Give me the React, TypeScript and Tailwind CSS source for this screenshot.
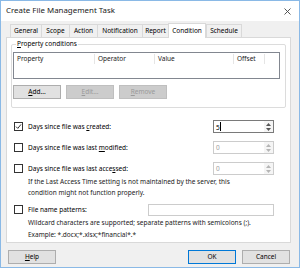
import React from "react";

const font = { fontFamily: '"Noto Sans", "Open Sans", sans-serif' };

function Check({ checked }: { checked?: boolean }) {
  return (
    <span className="flex h-[9px] w-[9px] shrink-0 items-center justify-center border border-[#333333] bg-white">
      {checked && (
        <svg width="7" height="7" viewBox="0 0 7 7">
          <path d="M1 3.6 L2.8 5.4 L6 1.4" fill="none" stroke="#333" strokeWidth="1" />
        </svg>
      )}
    </span>
  );
}

function Spin({ value, disabled }: { value: string; disabled?: boolean }) {
  return (
    <div className={`flex h-[13px] w-[61px] border ${disabled ? "border-[#cccccc] text-[#a0a0a0]" : "border-[#7a7a7a] text-black"} bg-white`}>
      <span className="flex-1 pl-[2px] leading-[11px]">
        {value}
        {!disabled && <span className="inline-block h-[9px] w-px translate-y-[1px] bg-black" />}
      </span>
      <span className="flex w-[9px] flex-col items-center justify-center gap-[2px] bg-[#f5f5f5]">
        <svg width="5" height="3" viewBox="0 0 5 3"><path d="M0 3 L2.5 0 L5 3Z" fill={disabled ? "#b5b5b5" : "#555"} /></svg>
        <svg width="5" height="3" viewBox="0 0 5 3"><path d="M0 0 L2.5 3 L5 0Z" fill={disabled ? "#b5b5b5" : "#555"} /></svg>
      </span>
    </div>
  );
}

function Btn({ children, disabled, focus }: { children: React.ReactNode; disabled?: boolean; focus?: boolean }) {
  return (
    <div
      className={`flex h-[14px] w-[48px] items-center justify-center border ${
        disabled
          ? "border-[#bfbfbf] bg-[#cccccc] text-[#9a9a9a]"
          : focus
          ? "border-[#0078d7] bg-[#e1e1e1] text-black"
          : "border-[#adadad] bg-[#e1e1e1] text-black"
      }`}
    >
      {children}
    </div>
  );
}

const tabs = [
  { label: "General", w: "w-[31px]" },
  { label: "Scope", w: "w-[28px]" },
  { label: "Action", w: "w-[28px]" },
  { label: "Notification", w: "w-[45px]" },
  { label: "Report", w: "w-[26px]" },
  { label: "Condition", w: "w-[38px]" },
  { label: "Schedule", w: "w-[36px]" },
];

export default function App() {
  return (
    <div style={font} className="flex h-[268px] w-[300px] flex-col border border-[#8ab9e6] bg-[#f0f0f0] text-[6.5px] text-black">
      <div className="flex h-[20px] shrink-0 items-center justify-between bg-white pl-[5px] pr-[8px]">
        <span className="text-[7.9px] text-[#1a1a1a]">Create File Management Task</span>
        <svg width="7" height="7" viewBox="0 0 7 7">
          <path d="M0.5 0.5 L6.5 6.5 M6.5 0.5 L0.5 6.5" stroke="#444" strokeWidth="0.9" />
        </svg>
      </div>

      <div className="flex flex-1 flex-col px-[5px] pt-[2px]">
        <div className="flex h-[14px] items-end pl-[4px]">
          {tabs.map((t) =>
            t.label === "Condition" ? (
              <div key={t.label} className={`relative z-10 -mb-px flex h-[15px] ${t.w} items-center justify-center border border-b-0 border-[#d9d9d9] bg-white`}>
                {t.label}
              </div>
            ) : (
              <div key={t.label} className={`flex h-[13px] ${t.w} items-center justify-center border border-b-0 border-r-0 border-[#d9d9d9] bg-[#f0f0f0] last:border-r`}>
                {t.label}
              </div>
            )
          )}
        </div>

        <div className="flex h-[206px] w-[285px] flex-col border border-[#d9d9d9] bg-white px-[4px]">
          <div className="relative mt-[6px] h-[64px] rounded-[2px] border border-[#dcdcdc] px-[1px]">
            <span className="absolute -top-[6px] left-[4px] bg-white px-[1px] leading-[10px]">
              <u>P</u>roperty conditions
            </span>
            <div className="mt-[7px] h-[27px] w-[267px] border border-[#828790] bg-white">
              <div className="flex h-[12px] items-center text-[#1a1a1a]">
                <span className="w-[81px] border-r border-[#e5e5e5] pl-[3px]">Property</span>
                <span className="w-[60px] border-r border-[#e5e5e5] pl-[3px]">Operator</span>
                <span className="w-[79px] border-r border-[#e5e5e5] pl-[3px]">Value</span>
                <span className="w-[31px] border-r border-[#e5e5e5] pl-[3px]">Offset</span>
              </div>
            </div>
            <div className="mt-[6px] flex gap-[5px]">
              <Btn>
                <span><u>A</u>dd...</span>
              </Btn>
              <Btn disabled>
                <span><u>E</u>dit...</span>
              </Btn>
              <Btn disabled>
                <span><u>R</u>emove</span>
              </Btn>
            </div>
          </div>

          <div className="mt-[12px] flex flex-col pl-[3px] pr-[12px]">
            <div className="flex h-[13px] items-center">
              <Check checked />
              <span className="ml-[5px] flex-1">Days since file was <u>c</u>reated:</span>
              <Spin value="5" />
            </div>
            <div className="mt-[8px] flex h-[13px] items-center">
              <Check />
              <span className="ml-[5px] flex-1">Days since file was last <u>m</u>odified:</span>
              <Spin value="0" disabled />
            </div>
            <div className="mt-[8px] flex h-[13px] items-center">
              <Check />
              <span className="ml-[5px] flex-1">Days since file was last acce<u>s</u>sed:</span>
              <Spin value="0" disabled />
            </div>
            <div className="mt-[1px] pl-[14px] leading-[11px] text-[#1a1a1a]">
              If the Last Access Time setting is not maintained by the server, this
              <br />
              condition might not function properly.
            </div>
            <div className="mt-[5px] flex h-[13px] items-center">
              <Check />
              <span className="ml-[5px] flex-1">File name patterns:</span>
              <div className="h-[12px] w-[126px] border border-[#cccccc] bg-white" />
            </div>
            <div className="mt-[1px] pl-[14px] leading-[12px] text-[#1a1a1a]">
              Wildcard characters are supported; separate patterns with semicolons (;).
              <br />
              Example: *.docx;*.xlsx;*financial*.*
            </div>
          </div>
        </div>

        <div className="mt-[7px] flex items-center">
          <div className="ml-[2px]">
            <Btn>
              <span><u>H</u>elp</span>
            </Btn>
          </div>
          <div className="ml-auto mr-[4px] flex gap-[6px]">
            <Btn focus>OK</Btn>
            <Btn>Cancel</Btn>
          </div>
        </div>
      </div>
    </div>
  );
}
